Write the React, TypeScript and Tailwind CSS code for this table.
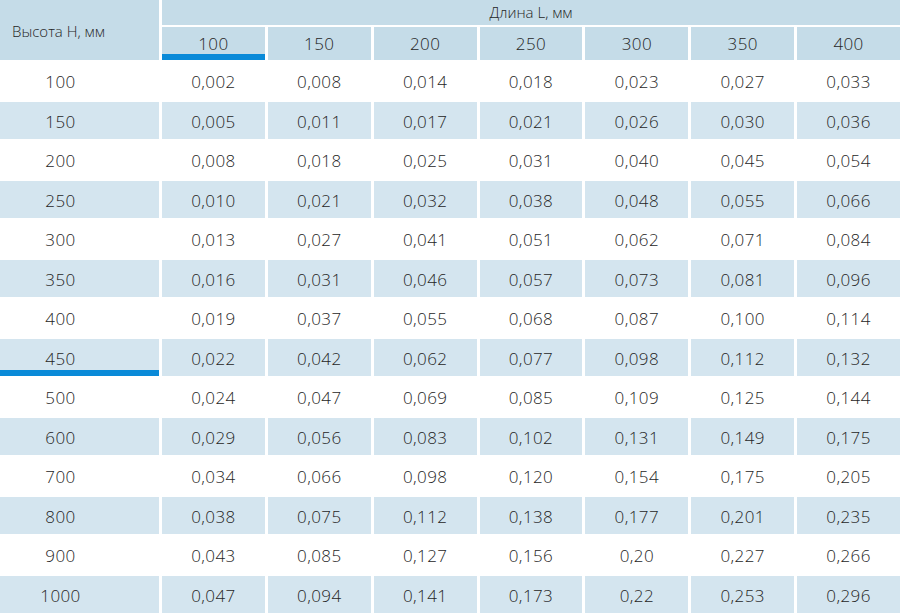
import React from "react";

const lengths = ["100", "150", "200", "250", "300", "350", "400"];

const rows: [string, string[]][] = [
  ["100", ["0,002", "0,008", "0,014", "0,018", "0,023", "0,027", "0,033"]],
  ["150", ["0,005", "0,011", "0,017", "0,021", "0,026", "0,030", "0,036"]],
  ["200", ["0,008", "0,018", "0,025", "0,031", "0,040", "0,045", "0,054"]],
  ["250", ["0,010", "0,021", "0,032", "0,038", "0,048", "0,055", "0,066"]],
  ["300", ["0,013", "0,027", "0,041", "0,051", "0,062", "0,071", "0,084"]],
  ["350", ["0,016", "0,031", "0,046", "0,057", "0,073", "0,081", "0,096"]],
  ["400", ["0,019", "0,037", "0,055", "0,068", "0,087", "0,100", "0,114"]],
  ["450", ["0,022", "0,042", "0,062", "0,077", "0,098", "0,112", "0,132"]],
  ["500", ["0,024", "0,047", "0,069", "0,085", "0,109", "0,125", "0,144"]],
  ["600", ["0,029", "0,056", "0,083", "0,102", "0,131", "0,149", "0,175"]],
  ["700", ["0,034", "0,066", "0,098", "0,120", "0,154", "0,175", "0,205"]],
  ["800", ["0,038", "0,075", "0,112", "0,138", "0,177", "0,201", "0,235"]],
  ["900", ["0,043", "0,085", "0,127", "0,156", "0,20", "0,227", "0,266"]],
  ["1000", ["0,047", "0,094", "0,141", "0,173", "0,22", "0,253", "0,296"]],
];

export default function App() {
  return (
    <div className="w-[900px] h-[615px] overflow-hidden bg-white text-[#262626] font-[350] [font-family:'Open_Sans','Noto_Sans',sans-serif]">
      <div className="grid grid-cols-[159px_repeat(7,1fr)] gap-x-[3px] gap-y-[2px]">
        {/* Header */}
        <div className="row-span-2 h-[60px] bg-[#c5dce8] flex items-center pl-3 pt-[2px] text-[15px]">
          Высота Н, мм
        </div>
        <div className="col-span-7 h-[25px] bg-[#c5dce8] flex items-center justify-center text-[15px]">
          Длина L, мм
        </div>
        {lengths.map((l, i) => (
          <div
            key={l}
            className={
              i === 0
                ? "h-[33px] bg-[#c5dce8] flex items-center justify-center text-[17px] tracking-[0.4px] shadow-[inset_0_-6px_0_#0a8ad8]"
                : "h-[33px] bg-[#c5dce8] flex items-center justify-center text-[17px] tracking-[0.4px]"
            }
          >
            {l}
          </div>
        ))}

        {/* Body */}
        {rows.map(([h, vals], r) => {
          const shaded = r % 2 === 1;
          const cell = shaded
            ? "h-[37.5px] bg-[#d4e5ef] flex items-center justify-center pt-[2px] text-[17px] tracking-[0.4px]"
            : "h-[37.5px] flex items-center justify-center pt-[2px] text-[17px] tracking-[0.4px]";
          return (
            <React.Fragment key={h}>
              <div
                className={
                  h === "450"
                    ? cell + " pr-[38px] shadow-[inset_0_-6px_0_#0a8ad8]"
                    : cell + " pr-[38px]"
                }
              >
                {h}
              </div>
              {vals.map((v, i) => (
                <div key={i} className={cell}>
                  {v}
                </div>
              ))}
            </React.Fragment>
          );
        })}
      </div>
    </div>
  );
}
